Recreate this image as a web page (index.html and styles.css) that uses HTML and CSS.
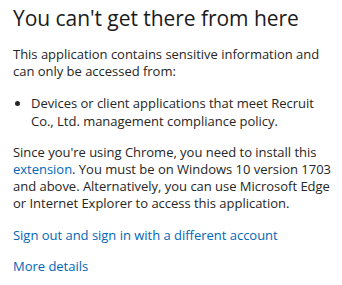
FILE: index.html
```html
<!DOCTYPE html>
<html>
<head>
<meta charset="utf-8">
<link rel="stylesheet" href="styles.css">
</head>
<body>
<main class="page">
  <h1 class="title">You can't get there from here</h1>
  <p class="text">This application contains sensitive information and can only be accessed from:</p>
  <ul class="list">
    <li class="item">Devices or client applications that meet Recruit Co., Ltd. management compliance policy.</li>
  </ul>
  <p class="text">Since you're using Chrome, you need to install this <a class="link" href="#">extension</a>. You must be on Windows 10 version 1703 and above. Alternatively, you can use Microsoft Edge or Internet Explorer to access this application.</p>
  <p class="text action"><a class="link" href="#">Sign out and sign in with a different account</a></p>
  <p class="text action2"><a class="link" href="#">More details</a></p>
</main>
</body>
</html>
```
FILE: styles.css
```css
html, body {
  margin: 0;
  padding: 0;
  background: #ffffff;
}
.page {
  padding: 4px 11px 0 13px;
  font-family: "Open Sans", "Noto Sans", sans-serif;
  color: #262626;
}
.title {
  margin: 0;
  font-size: 21px;
  line-height: 28px;
  font-weight: 400;
  color: #1b1b1b;
  letter-spacing: -0.05px;
}
.text {
  margin: 13.5px 0 0 0;
  font-size: 13px;
  line-height: 17.3px;
  letter-spacing: -0.02px;
}
.list {
  margin: 15.4px 0 0 0;
  padding: 0 0 0 18px;
  font-size: 13px;
  line-height: 17.3px;
  letter-spacing: -0.02px;
}
.item {
  padding-left: 0;
}
.action {
  margin-top: 14px;
}
.action2 {
  margin-top: 14px;
}
.link {
  color: #0067b8;
  text-decoration: none;
}
```
